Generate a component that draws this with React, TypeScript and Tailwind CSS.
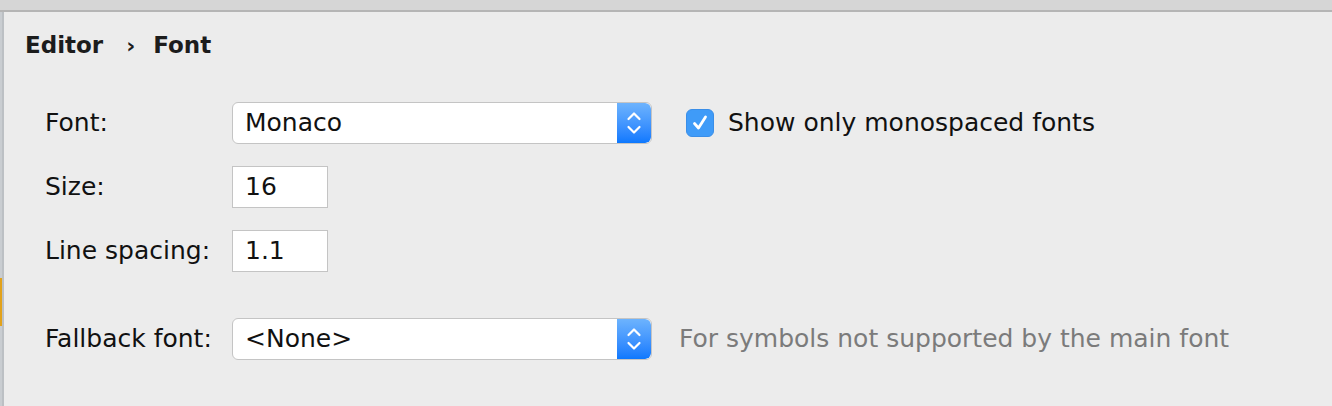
import React from 'react'

const ui = { fontFamily: '"DejaVu Sans", "Liberation Sans", sans-serif' }

function Stepper() {
  return (
    <div className="flex items-center justify-center w-[34px] h-full bg-gradient-to-b from-[#6db3fd] to-[#0b78fe] rounded-r-[6px]">
      <svg width="16" height="26" viewBox="0 0 16 26" fill="none" stroke="#fff" strokeWidth="2.2" strokeLinecap="round" strokeLinejoin="round">
        <path d="M2.5 9 L8 3.5 L13.5 9" />
        <path d="M2.5 17 L8 22.5 L13.5 17" />
      </svg>
    </div>
  )
}

function Select({ value }: { value: string }) {
  return (
    <div className="flex w-[420px] h-[42px] rounded-[6px] bg-white border border-[#c4c4c4] overflow-hidden">
      <div className="flex-1 flex items-center pl-[12px] text-[25px] text-[#111]">{value}</div>
      <Stepper />
    </div>
  )
}

function TextInput({ value }: { value: string }) {
  return (
    <div className="flex items-center w-[96px] h-[42px] bg-white border border-[#c4c4c4] pl-[12px] text-[25px] text-[#111]">
      {value}
    </div>
  )
}

function Checkbox() {
  return (
    <div className="flex items-center justify-center w-[28px] h-[28px] rounded-[6px] bg-[#3f9bf8] border border-[#3a8ee8]">
      <svg width="20" height="20" viewBox="0 0 20 20" fill="none" stroke="#fff" strokeWidth="2.8" strokeLinecap="round" strokeLinejoin="round">
        <path d="M4.5 10.5 L8.5 15 L15.5 4" />
      </svg>
    </div>
  )
}

export default function App() {
  return (
    <div className="w-[1332px] h-[406px] bg-[#ececec] flex flex-col overflow-hidden" style={ui}>
      {/* window strip */}
      <div className="h-[12px] bg-[#d6d6d6] border-b-2 border-[#b5b5b5]" />

      <div className="flex flex-1">
        {/* left edge */}
        <div className="flex">
          <div className="w-[2px] flex flex-col bg-[#c9cdd1]">
            <div className="h-[266px]" />
            <div className="h-[48px] bg-[#e2a21b]" />
          </div>
          <div className="w-[2px] bg-[#bcc0c4]" />
        </div>

        <div className="flex-1 flex flex-col">
          {/* breadcrumb */}
          <div className="flex items-center h-[32px] mt-[17px] pl-[21px] text-[23px] font-bold text-[#1c1c1c]">
            <span>Editor</span>
            <span className="ml-[23px] mr-[18px] text-[22px] font-semibold">›</span>
            <span>Font</span>
          </div>

          <div className="flex flex-col pl-[41px] mt-[41px] text-[25px] text-[#111]">
            <div className="flex items-center h-[42px]">
              <div className="w-[187px]">Font:</div>
              <Select value="Monaco" />
              <div className="flex items-center ml-[34px] gap-[14px]">
                <Checkbox />
                <span>Show only monospaced fonts</span>
              </div>
            </div>

            <div className="flex items-center h-[42px] mt-[22px]">
              <div className="w-[187px]">Size:</div>
              <TextInput value="16" />
            </div>

            <div className="flex items-center h-[42px] mt-[22px]">
              <div className="w-[187px]">Line spacing:</div>
              <TextInput value="1.1" />
            </div>

            <div className="flex items-center h-[42px] mt-[46px]">
              <div className="w-[187px]">Fallback font:</div>
              <Select value="<None>" />
              <span className="ml-[27px] text-[#7b7b7b]">For symbols not supported by the main font</span>
            </div>
          </div>
        </div>
      </div>
    </div>
  )
}
